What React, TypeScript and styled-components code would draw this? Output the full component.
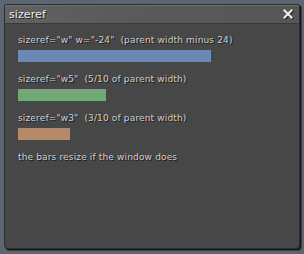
import React from "react";
import styled, { createGlobalStyle } from "styled-components";

const Global = createGlobalStyle`
  html, body { margin: 0; padding: 0; }
  body { background: #5c6673; width: 304px; height: 254px; overflow: hidden; }
`;

const Screen = styled.div`
  width: 304px;
  height: 254px;
  box-sizing: border-box;
  padding: 4px 4px 5px 4px;
  display: flex;
`;

const Window = styled.div`
  flex: 1;
  display: flex;
  flex-direction: column;
  background: #474747;
  border: 1px solid #2e2e2e;
  border-radius: 2px 2px 4px 4px;
  box-shadow: 1px 1px 0 #141414, 2px 2px 0 rgba(0,0,0,0.35);
  overflow: hidden;
`;

const TitleBar = styled.div`
  height: 18px;
  display: flex;
  align-items: center;
  justify-content: space-between;
  padding: 0 6px 0 4px;
  background: linear-gradient(100deg, #626262 0%, #5a5a5a 40%, #565656 100%);
  border-bottom: 1px solid #3a3a3a;
  box-shadow: inset 0 1px 0 #6e6e6e;
`;

const Title = styled.span`
  font-family: "DejaVu Sans", sans-serif;
  font-size: 11px;
  color: #ececec;
  text-shadow: 1px 1px 0 #1e1e1e;
  letter-spacing: 0.1px;
`;

const Close = styled.svg`
  width: 10px;
  height: 10px;
  filter: drop-shadow(1px 1px 0 #1e1e1e);
`;

const Body = styled.div`
  display: flex;
  flex-direction: column;
  padding: 11px 13px 0 13px;
`;

const Label = styled.div`
  font-family: "DejaVu Sans", sans-serif;
  font-size: 9px;
  line-height: 11px;
  color: #cfcfcf;
  text-shadow: 1px 1px 0 #1a1a1a;
  letter-spacing: 0.15px;
  white-space: pre;
`;

const Bar = styled.div<{ $w: number; $c: string }>`
  width: ${(p) => p.$w}px;
  height: 12px;
  background: ${(p) => p.$c};
  margin: 4px 0 12px 0;
`;

export default function App() {
  return (
    <>
      <Global />
      <Screen>
        <Window>
          <TitleBar>
            <Title>sizeref</Title>
            <Close viewBox="0 0 10 10">
              <path d="M1.5 1.5 L8.5 8.5 M8.5 1.5 L1.5 8.5" stroke="#f0f0f0" strokeWidth="2" strokeLinecap="square" />
            </Close>
          </TitleBar>
          <Body>
            <Label>sizeref="w" w="-24"  (parent width minus 24)</Label>
            <Bar $w={193} $c="#6a8ab4" />
            <Label>sizeref="w5"  (5/10 of parent width)</Label>
            <Bar $w={88} $c="#72a777" />
            <Label>sizeref="w3"  (3/10 of parent width)</Label>
            <Bar $w={52} $c="#b4896a" />
            <Label>the bars resize if the window does</Label>
          </Body>
        </Window>
      </Screen>
    </>
  );
}
